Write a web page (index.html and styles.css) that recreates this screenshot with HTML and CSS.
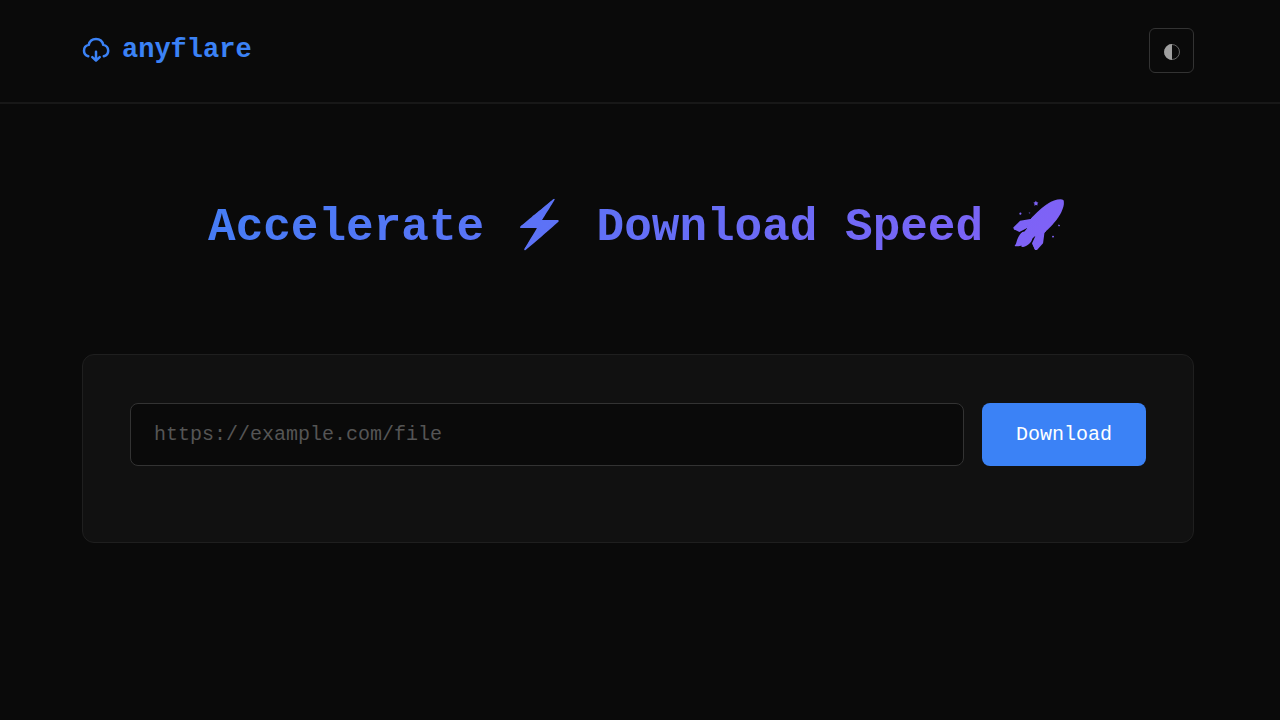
FILE: index.html
```html
<!DOCTYPE html>
<html lang="en">
<head>
<meta charset="utf-8">
<meta name="viewport" content="width=device-width, initial-scale=1">
<title>anyflare</title>
<link rel="stylesheet" href="styles.css">
</head>
<body>
<header class="header">
  <div class="container header-row">
    <a class="logo" href="#">
      <svg class="logo-icon" viewBox="0 2 28 28" fill="none" stroke="currentColor" stroke-width="2.5" stroke-linecap="round" stroke-linejoin="round" aria-hidden="true">
        <path d="M6.3 22.2C3.7 21.4 2 19.3 2 16.7C2 13.9 3.9 11.5 6.7 10.9C7.5 7.3 10.3 4.9 14 4.9S20.5 7.3 21.3 10.9C24.1 11.5 26.2 13.9 26.2 16.7C26.2 19.3 24.4 21.4 21.8 22.2"/>
        <path d="M14 17.8v8.6M10.3 23.2l3.7 3.4l3.7-3.4"/>
      </svg>
      <span>anyflare</span>
    </a>
    <button class="theme-toggle" type="button" aria-label="Toggle theme">
      <svg class="theme-icon" viewBox="0 0 18 18" aria-hidden="true">
        <circle cx="9" cy="9" r="7.5" fill="none" stroke="currentColor" stroke-width="0.6"/>
        <path d="M9 1.1a7.9 7.9 0 0 0 0 15.8z" fill="currentColor"/>
      </svg>
    </button>
  </div>
</header>
<main class="container">
  <h1 class="title">Accelerate <span class="emoji">⚡</span> Download Speed <span class="emoji">🚀</span></h1>
  <section class="card">
    <form class="form">
      <input class="url" type="url" placeholder="https://example.com/file" aria-label="File URL">
      <button class="submit" type="submit">Download</button>
    </form>
  </section>
</main>
</body>
</html>
```
FILE: styles.css
```css
* { box-sizing: border-box; }
body {
  margin: 0;
  min-height: 100vh;
  background: #0a0a0a;
  color: #fff;
  font-family: "Liberation Mono", monospace;
}
.container { padding: 0 86px 0 82px; }
.header { padding: 28px 0 29px; border-bottom: 2px solid #181818; }
.header-row { display: flex; align-items: flex-start; justify-content: space-between; }
.logo {
  display: flex;
  align-items: center;
  gap: 12px;
  padding-top: 2px;
  color: #3b82f6;
  font-size: 27px;
  line-height: 40px;
  font-weight: 700;
  text-decoration: none;
}
.logo-icon { width: 28px; height: 28px; }
.theme-toggle {
  display: flex;
  align-items: center;
  justify-content: center;
  width: 45px;
  height: 45px;
  padding: 2px 0 0;
  border: 1px solid #333;
  border-radius: 6px;
  background: transparent;
  color: #a0a0a0;
}
.theme-icon { width: 18px; height: 18px; }
.title {
  margin: 85px 0 91px;
  font-size: 46px;
  line-height: 70px;
  font-weight: 700;
  text-align: center;
  background: linear-gradient(135deg, #3b82f6, #8b5cf6);
  background-clip: text;
  -webkit-background-clip: text;
  color: transparent;
}
.emoji { font-family: "Noto Color Emoji", "Liberation Mono", monospace; }
.card {
  padding: 48px 47px 76px;
  border: 1px solid #1f1f1f;
  border-radius: 12px;
  background: #111;
}
.form { display: flex; gap: 18px; }
.url, .submit {
  height: 63px;
  border-radius: 8px;
  font-family: "Liberation Mono", monospace;
  font-size: 20px;
}
.url {
  flex: 1;
  min-width: 0;
  padding: 0 23px;
  border: 1px solid #333;
  background: #0a0a0a;
  color: #fff;
}
.url::placeholder { color: #555; }
.submit {
  padding: 0 34px;
  border: 0;
  background: #3b82f6;
  color: #fff;
}
```
